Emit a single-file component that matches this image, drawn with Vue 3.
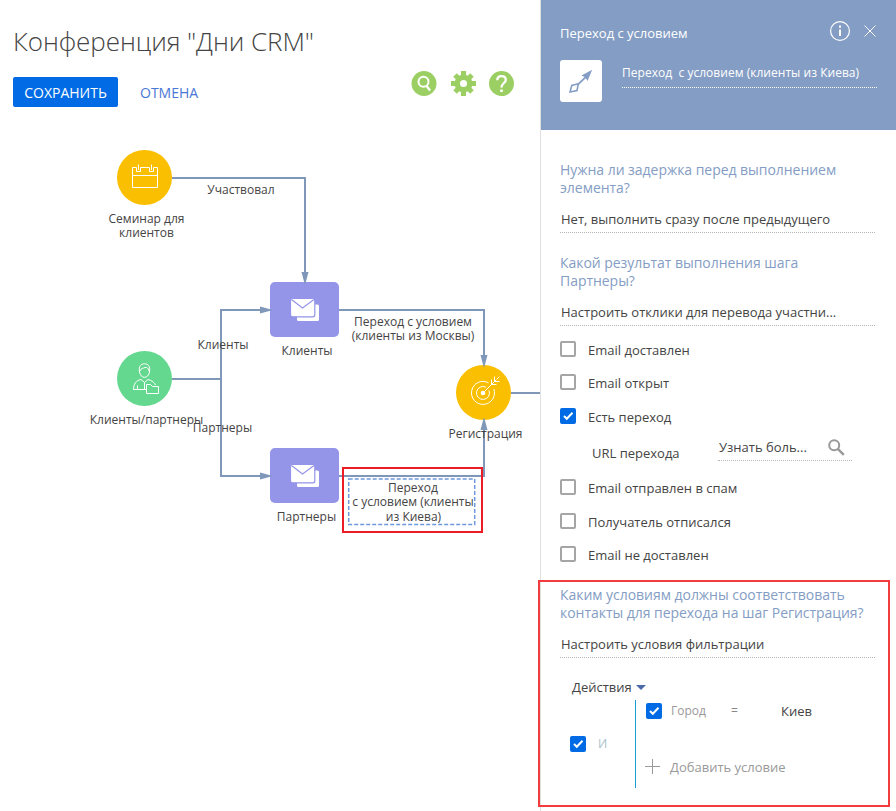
<script setup>
import { ref } from 'vue'

const edges = [
  'M172 178H305V273',
  'M172 379H221M262 310H221V476H262',
  'M339 310H484V357',
  'M339 476H484V428',
  'M511 393H541',
]
const arrows = [
  'M301.500 272h7l-3.200 12h-.6z',
  'M260 306.500v7l12 -3.200v-.6z',
  'M260 472.500v7l12 -3.200v-.6z',
  'M480.500 355h7l-3.200 12h-.6z',
  'M480.500 430h7l-3.200 -12h-.6z',
]
const mails = [{ x: 270, y: 282 }, { x: 270, y: 448 }]
const labels = [
  { x: 241, y: 194, t: 'Участвовал' },
  { x: 146.5, y: 223, t: 'Семинар для' },
  { x: 146.5, y: 237, t: 'клиентов' },
  { x: 223, y: 349, t: 'Клиенты' },
  { x: 307, y: 355, t: 'Клиенты' },
  { x: 146.5, y: 424, t: 'Клиенты/партнеры' },
  { x: 222.5, y: 432, t: 'Партнеры' },
  { x: 306.5, y: 521, t: 'Партнеры' },
  { x: 413, y: 326, t: 'Переход с условием' },
  { x: 413, y: 340, t: '(клиенты из Москвы)' },
  { x: 485.5, y: 438, t: 'Регистрация' },
  { x: 413, y: 492, t: 'Переход' },
  { x: 413, y: 506, t: 'с условием (клиенты' },
  { x: 413.5, y: 521, t: 'из Киева)' },
]
const responses = ref([
  { label: 'Email доставлен', on: false },
  { label: 'Email открыт', on: false },
  { label: 'Есть переход', on: true, url: true },
  { label: 'Email отправлен в спам', on: false },
  { label: 'Получатель отписался', on: false },
  { label: 'Email не доставлен', on: false },
])
</script>

<template>
  <div class="page">
    <main class="designer">
      <h1>Конференция "Дни CRM"</h1>
      <div class="toolbar">
        <button class="save">СОХРАНИТЬ</button>
        <button class="cancel">ОТМЕНА</button>
        <div class="tools">
          <svg width="26" height="25" viewBox="-0.500 0 26 25">
            <circle cx="12.500" cy="12.500" r="12.500" fill="#9ccf63" />
            <circle cx="12" cy="10.700" r="5" fill="none" stroke="#fff" stroke-width="2" />
            <path d="M14.800 14.500L18.500 19.500" stroke="#fff" stroke-width="2.300" />
          </svg>
          <svg width="25" height="25" viewBox="-12.500 -12.500 25 25">
            <g fill="#9ccf63">
              <circle r="9" />
              <rect x="-2.500" y="-12.500" width="5" height="25" />
              <rect x="-12.500" y="-2.500" width="25" height="5" />
              <rect x="-2.500" y="-12" width="5" height="24" transform="rotate(45)" />
              <rect x="-2.500" y="-12" width="5" height="24" transform="rotate(-45)" />
            </g>
            <circle r="3.500" fill="#fff" />
          </svg>
          <svg width="25" height="25" viewBox="0 0 25 25">
            <circle cx="12.500" cy="12.500" r="12.500" fill="#9ccf63" />
            <path d="M8.300 9.200C8.300 6.500 10 5.200 12.500 5.200S16.800 6.700 16.800 9C16.800 12 12.500 12.200 12.500 16.500" fill="none" stroke="#fff" stroke-width="2.300" />
            <rect x="11.200" y="18.500" width="2.600" height="2.500" fill="#fff" />
          </svg>
        </div>
      </div>

      <svg class="diagram" width="541" height="690" viewBox="0 121 541 690">
        <path v-for="e in edges" :key="e" :d="e" class="edge" />

        <circle cx="144.500" cy="177.500" r="27.500" fill="#f9bf00" />
        <path class="glyph" d="M132.500 167.500H136.500V171.500H140.500V167.500H149.500V171.500H153.500V167.500H157.500V187.500H132.500ZM132.500 175.500H157.500M138.500 164.500V170M151.500 164.500V170" />

        <circle cx="144.500" cy="378.500" r="27.500" fill="#65d88f" />
        <g class="glyph">
          <path d="M139.500 372C138.500 366 141 363.800 144.500 363.800S150.500 366 149.500 372C148.700 375.500 147 377.300 144.500 377.300S140.300 375.500 139.500 372ZM140 371C141 368 143 368.500 145 367.500C146.500 367 148.500 368 149 371" />
          <path d="M141 379.500C136 380.500 133.500 384 133.500 389.500H146.500M141 379.500L144.500 382.500L148 379.500C152 380.500 154.500 382.500 155.500 385M144.500 382.500V389.500M137.500 389V385.500" />
          <path d="M146.500 393.500V384.500H150.500L152.500 386.500H158.500V393.500Z" fill="#65d88f" />
        </g>

        <circle cx="483.500" cy="392.500" r="27.500" fill="#f9bf00" />
        <g class="glyph">
          <path d="M488.500 382.800A11.500 11.500 0 1 0 493.800 389" />
          <path d="M486 387.200A6.500 6.500 0 1 0 489 390.500" />
          <path d="M483 393L496 380M491.500 379.500V384.500H496.500M494.500 376.500V381.500H499.500M496.500 379.500L499.500 376.500" />
        </g>
        <circle cx="483" cy="393" r="2.300" fill="#fff" />

        <g v-for="m in mails" :key="m.y" :transform="`translate(${m.x} ${m.y})`">
          <rect width="69" height="55" rx="5" fill="#9494e9" />
          <rect x="27" y="22.500" width="22" height="16.500" rx="1.500" fill="#fff" />
          <rect x="20.500" y="16.500" width="24.300" height="18.300" rx="2" fill="#fff" stroke="#9494e9" stroke-width="1.200" />
          <path d="M21.500 17.500L32.500 26L44 17.500" fill="none" stroke="#9494e9" stroke-width="1.200" />
        </g>

        <path v-for="a in arrows" :key="a" :d="a" fill="#7f97b8" />
        <rect x="348.700" y="479" width="126" height="45.500" class="selection" />
        <text v-for="l in labels" :key="l.t + l.y" :x="l.x" :y="l.y">{{ l.t }}</text>
        <rect x="343" y="468" width="139" height="64" fill="none" stroke="#ec1c24" stroke-width="2" />
      </svg>
    </main>

    <aside class="panel">
      <header>
        <div class="head-row">
          <span>Переход с условием</span>
          <svg width="48" height="22" viewBox="0 0 48 22" fill="none" stroke="#fff">
            <circle cx="11" cy="11" r="9.400" stroke-width="1.200" />
            <path d="M11 9.500V16" stroke-width="2" />
            <path d="M11 5.500V7.700" stroke-width="2" />
            <path d="M35.500 5.500L46.500 16.500M46.500 5.500L35.500 16.500" />
          </svg>
        </div>
        <div class="name-row">
          <svg class="kind" width="42" height="42" viewBox="0 0 42 42">
            <path d="M32.200 9.800L21.500 15.500L24.500 17L17.800 23.600L19 24.800L25.800 18.200L27.500 21Z" fill="#849dc4" />
            <path d="M10 32L11.800 25.500L18.300 23.800L17 30.500Z" fill="none" stroke="#849dc4" stroke-width="1.600" />
          </svg>
          <div class="name">Переход&nbsp; с условием (клиенты из Киева)</div>
        </div>
      </header>

      <section class="question">
        <h2>Нужна ли задержка перед выполнением элемента?</h2>
        <div class="field">Нет, выполнить сразу после предыдущего</div>
      </section>
      <section class="question">
        <h2>Какой результат выполнения шага<br>Партнеры?</h2>
        <div class="field">Настроить отклики для перевода участни...</div>
      </section>

      <ul class="responses">
        <li v-for="r in responses" :key="r.label">
          <div class="option" @click="r.on = !r.on">
            <span class="box" :class="{ on: r.on }">
              <svg v-if="r.on" width="16" height="16" viewBox="0 0 16 16"><path d="M4 8L6.800 10.800L12.500 4.800" /></svg>
            </span>
            <span>{{ r.label }}</span>
          </div>
          <div v-if="r.url" class="url">
            <span class="url-label">URL перехода</span>
            <span class="url-value">
              Узнать боль...
              <svg width="17" height="17" viewBox="0 0 17 17" fill="none" stroke="#999">
                <circle cx="6.200" cy="6.200" r="5" stroke-width="2" />
                <path d="M9.800 9.800L15.800 15.800" stroke-width="2.400" />
              </svg>
            </span>
          </div>
        </li>
      </ul>

      <section class="question">
        <h2>Каким условиям должны соответствовать контакты для перехода на шаг Регистрация?</h2>
        <div class="field">Настроить условия фильтрации</div>
      </section>

      <div class="filter">
        <div class="actions">Действия<i class="caret"></i></div>
        <div class="group">
          <div class="operator">
            <span class="box on"><svg width="16" height="16" viewBox="0 0 16 16"><path d="M4 8L6.800 10.800L12.500 4.800" /></svg></span>
            <span class="and">И</span>
          </div>
          <div class="conditions">
            <div class="condition">
              <span class="box on"><svg width="16" height="16" viewBox="0 0 16 16"><path d="M4 8L6.800 10.800L12.500 4.800" /></svg></span>
              <span class="column">Город</span>
              <span class="compare">=</span>
              <span class="value">Киев</span>
            </div>
            <div class="add">
              <svg width="15" height="15" viewBox="0 0 15 15"><path d="M7.500 0V15M0 7.500H15" stroke="#999" /></svg>
              Добавить условие
            </div>
          </div>
        </div>
      </div>
      <div class="callout"></div>
    </aside>
  </div>
</template>

<style>
body { margin: 0; background: #fff; }
</style>

<style scoped>
.page {
  display: flex;
  width: 896px;
  height: 811px;
  overflow: hidden;
  font: 13px/18px "Open Sans", sans-serif;
  color: #444;
}
.designer { width: 540px; flex: none; overflow: hidden; }
h1 {
  margin: 0;
  padding: 23px 0 0 13px;
  font-size: 26px;
  font-weight: 300;
  line-height: 36px;
  letter-spacing: -0.08px;
}
.toolbar {
  display: flex;
  align-items: flex-start;
  box-sizing: border-box;
  height: 62px;
  padding: 18px 0 0 13px;
}
button {
  height: 30px;
  padding: 1px 0 0;
  border: 0;
  font: 14px/28px "Open Sans", sans-serif;
}
.save { width: 105px; border-radius: 2px; background: #006be5; color: #fff; }
.cancel { width: 58px; margin-left: 22px; background: none; color: #4a76d4; }
.tools { display: flex; gap: 13px; margin: -6px 0 0 213px; }
.tools svg:first-child { margin-right: 1px; }
.diagram { display: block; }
.diagram text {
  font: 12px "Open Sans", sans-serif;
  fill: #444;
  text-anchor: middle;
}
.edge { fill: none; stroke: #7f97b8; stroke-width: 2; }
.glyph { fill: none; stroke: #fff; stroke-width: 1; }
.selection { fill: none; stroke: #6d98dd; stroke-width: 1.5; stroke-dasharray: 4 2; }

.panel {
  position: relative;
  box-sizing: border-box;
  width: 356px;
  height: 811px;
  border-left: 1px solid #e0e0e0;
}
header {
  box-sizing: border-box;
  height: 130px;
  margin-bottom: 31px;
  padding: 20px 19px 0;
  background: #849dc4;
  color: #fff;
}
.head-row { display: flex; justify-content: space-between; height: 40px; }
.head-row span { padding-top: 4px; }
.name-row { display: flex; gap: 20px; }
.kind { border-radius: 3px; background: #fff; }
.name {
  box-sizing: border-box;
  width: 255px;
  height: 28px;
  padding-top: 4px;
  border-bottom: 1px dotted #fff;
  font-size: 12px;
  letter-spacing: 0.03px;
}
.question { width: 315px; margin: 0 0 21px 19px; }
h2 {
  width: 320px;
  margin: 0 0 13px;
  font-size: 14px;
  font-weight: 400;
  line-height: 18px;
  letter-spacing: -0.04px;
  color: #849dc4;
}
.field { height: 22px; border-bottom: 1px dotted #b5b5b5; text-indent: 1px; }
.responses { margin: -6px 0 0 19px; padding: 0; list-style: none; }
.responses li { height: 34px; }
.responses li:first-child,
.responses li:nth-child(5) { height: 33px; }
.responses li:nth-child(3) { height: 71px; }
.responses li:last-child { height: 40px; }
.option { display: flex; gap: 12px; height: 18px; }
.box {
  box-sizing: border-box;
  flex: none;
  width: 16px;
  height: 16px;
  border: 2px solid #a5a5a5;
  border-radius: 2px;
}
.box.on { border: 0; background: #006be5; }
.box svg { display: block; fill: none; stroke: #fff; stroke-width: 2; }
.url { display: flex; padding: 12px 0 0 32px; }
.url-label { width: 126px; padding-top: 6px; }
.url-value {
  display: flex;
  justify-content: space-between;
  box-sizing: border-box;
  width: 134px;
  height: 23px;
  padding: 0 7px 0 1px;
  border-bottom: 1px dotted #b5b5b5;
}
.url-value svg { margin-top: 1px; }
.filter { margin-top: -1px; padding-left: 29px; }
.actions { display: flex; align-items: center; height: 18px; margin: 0 0 4px 2px; }
.caret {
  margin-left: 4px;
  border: 5px solid transparent;
  border-top-color: #4b6ca8;
  border-bottom: 0;
}
.group { display: flex; height: 88px; }
.operator { display: flex; gap: 12px; width: 65px; padding-top: 36px; }
.and { font-size: 12px; line-height: 16px; color: #a9c0cc; }
.conditions { padding-left: 10px; border-left: 1px solid #1a9fd0; }
.condition { display: flex; height: 16px; padding: 3px 0 39px; line-height: 16px; }
.condition .column { width: 60px; margin-left: 9px; font-size: 12px; color: #999; }
.condition .compare { width: 50px; font-size: 12px; color: #888; }
.add { display: flex; gap: 10px; color: #999; }
.add svg { margin: 1px 0 0 -1px; }
.callout {
  position: absolute;
  left: -3px;
  top: 580px;
  box-sizing: border-box;
  width: 352px;
  height: 227px;
  border: 2px solid #f23c3e;
}
</style>
